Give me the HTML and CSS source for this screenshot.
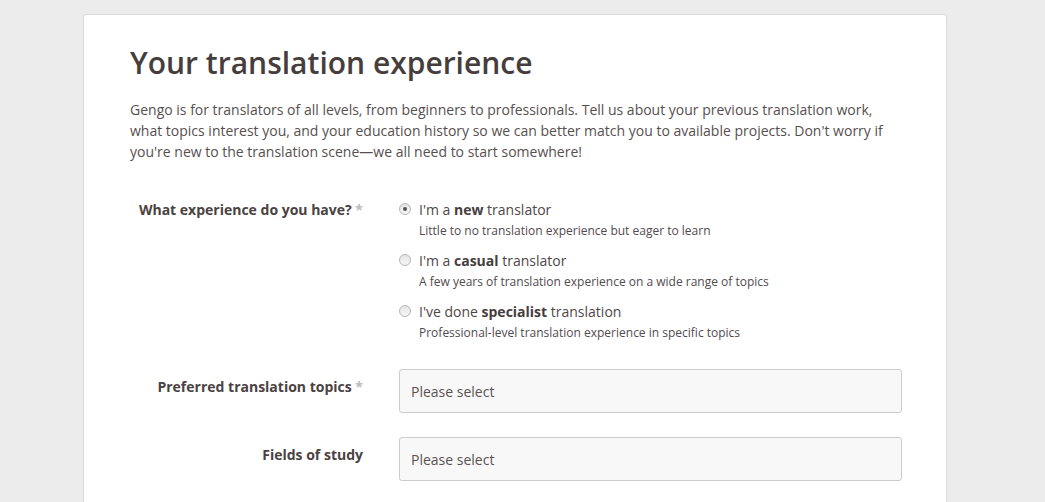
FILE: index.html
```html
<!DOCTYPE html>
<html>
<head>
<meta charset="utf-8">
<link rel="stylesheet" href="styles.css">
</head>
<body>
<div class="card">
  <h1 class="title">Your translation experience</h1>
  <p class="intro">Gengo is for translators of all levels, from beginners to professionals. Tell us about your previous translation work, what topics interest you, and your education history so we can better match you to available projects. Don't worry if you're new to the translation scene—we all need to start somewhere!</p>

  <div class="row">
    <div class="label">What experience do you have? <span class="req">*</span></div>
    <div class="options">
      <div class="option">
        <span class="radio checked"></span>
        <div class="opt-text">
          <div class="opt-title">I'm a <b>new</b> translator</div>
          <div class="opt-desc">Little to no translation experience but eager to learn</div>
        </div>
      </div>
      <div class="option">
        <span class="radio"></span>
        <div class="opt-text">
          <div class="opt-title">I'm a <b>casual</b> translator</div>
          <div class="opt-desc">A few years of translation experience on a wide range of topics</div>
        </div>
      </div>
      <div class="option">
        <span class="radio"></span>
        <div class="opt-text">
          <div class="opt-title">I've done <b>specialist</b> translation</div>
          <div class="opt-desc">Professional-level translation experience in specific topics</div>
        </div>
      </div>
    </div>
  </div>

  <div class="row">
    <div class="label field-label">Preferred translation topics <span class="req">*</span></div>
    <div class="select">Please select</div>
  </div>

  <div class="row">
    <div class="label field-label">Fields of study</div>
    <div class="select">Please select</div>
  </div>
</div>
</body>
</html>
```
FILE: styles.css
```css
html, body {
  margin: 0;
  padding: 0;
  background: #ececec;
  font-family: "Open Sans", "Noto Sans", sans-serif;
  color: #4a4242;
}
.card {
  box-sizing: border-box;
  width: 864px;
  margin: 14px 0 0 83px;
  min-height: 600px;
  background: #fff;
  border: 1px solid #dadada;
  border-radius: 3px;
  padding: 28px 44px 0 46px;
}
.title {
  margin: 0 0 16px;
  font-size: 30px;
  line-height: 40px;
  font-weight: 600;
  color: #463d3d;
}
.intro {
  margin: 0 0 38px;
  font-size: 14px;
  line-height: 21px;
  color: #574f4f;
}
.row {
  display: grid;
  grid-template-columns: 233px 1fr;
  column-gap: 36px;
  margin-bottom: 24px;
}
.label {
  text-align: right;
  font-size: 14px;
  line-height: 20px;
  font-weight: 700;
  color: #4a4242;
}
.field-label {
  padding-top: 8px;
}
.req {
  color: #bbbbbb;
}
.options {
  display: flex;
  flex-direction: column;
  gap: 11px;
  padding-bottom: 3px;
}
.option {
  display: flex;
  align-items: flex-start;
  gap: 8px;
}
.radio {
  box-sizing: border-box;
  flex: none;
  width: 12px;
  height: 12px;
  margin-top: 3px;
  border-radius: 50%;
  border: 1px solid #b5b5b5;
  background: linear-gradient(#e4e4e4, #f7f7f7);
  display: flex;
  align-items: center;
  justify-content: center;
}
.radio.checked::after {
  content: "";
  width: 4px;
  height: 4px;
  border-radius: 50%;
  background: #555;
}
.opt-title {
  font-size: 14px;
  line-height: 20px;
  color: #4f4747;
}
.opt-title b {
  font-weight: 700;
  color: #463e3e;
}
.opt-desc {
  margin-top: 2px;
  font-size: 12px;
  line-height: 18px;
  color: #524a4f;
}
.select {
  box-sizing: border-box;
  height: 44px;
  width: 503px;
  border: 1px solid #cccccc;
  border-radius: 3px;
  background: #f8f8f8;
  padding: 1px 11px 0;
  font-size: 14px;
  line-height: 42px;
  color: #5a5252;
}
```
